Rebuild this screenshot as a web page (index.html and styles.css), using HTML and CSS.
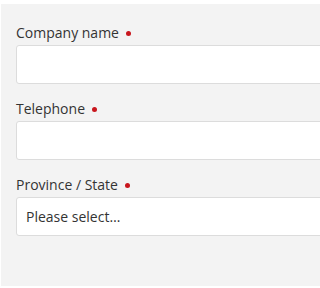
FILE: index.html
```html
<!DOCTYPE html>
<html>
<head>
<meta charset="utf-8">
<link rel="stylesheet" href="styles.css">
</head>
<body>
<div class="panel">
  <div class="field">
    <label class="label">Company name <span class="req"></span></label>
    <input class="control" type="text">
  </div>
  <div class="field">
    <label class="label">Telephone <span class="req"></span></label>
    <input class="control" type="text">
  </div>
  <div class="field">
    <label class="label">Province / State <span class="req"></span></label>
    <select class="control select"><option>Please select…</option></select>
  </div>
</div>
</body>
</html>
```
FILE: styles.css
```css
html, body {
  margin: 0;
  padding: 0;
  background: #ffffff;
  overflow: hidden;
}
body {
  font-family: "Open Sans", "Noto Sans", sans-serif;
  color: #333333;
}
.panel {
  margin: 4px 0 2px 1px;
  height: 282px;
  background: #f3f3f3;
  padding: 19px 0 0 15px;
  box-sizing: border-box;
  display: flex;
  flex-direction: column;
  gap: 15px;
  overflow: hidden;
}
.field {
  display: flex;
  flex-direction: column;
  gap: 2px;
}
.label {
  font-size: 14px;
  line-height: 20px;
  display: flex;
  align-items: center;
  gap: 7px;
}
.req {
  width: 5px;
  height: 5px;
  border-radius: 50%;
  background: #c8161d;
  margin-top: 1px;
}
.control {
  width: calc(100% + 40px);
  height: 39px;
  box-sizing: border-box;
  border: 1px solid #dcdcdc;
  border-radius: 3px;
  background: #ffffff;
  font-family: inherit;
  font-size: 14px;
  color: #333333;
  padding: 0 9px;
  margin: 0;
  outline: none;
}
.select {
  appearance: none;
  -webkit-appearance: none;
}
```
